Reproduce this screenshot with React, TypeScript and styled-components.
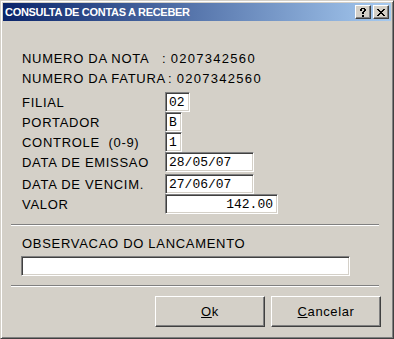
import React from 'react';
import styled, { createGlobalStyle } from 'styled-components';

const Global = createGlobalStyle`
  html, body { margin: 0; padding: 0; background: #D4D0C8; }
  body { font-family: "Liberation Sans", Arial, sans-serif; color: #000; }
  * { box-sizing: border-box; }
`;

const Window = styled.div`
  width: 394px;
  height: 339px;
  background: #D4D0C8;
  border: 1px solid;
  border-color: #D4D0C8 #404040 #404040 #D4D0C8;
  box-shadow: inset 1px 1px #ffffff, inset -1px -1px #808080;
  padding: 2px;
  display: flex;
  flex-direction: column;
`;

const TitleBar = styled.div`
  height: 18px;
  display: flex;
  align-items: center;
  background: linear-gradient(to right, #0A246A, #A6CAF0);
  padding-left: 2px;
`;

const TitleText = styled.span`
  color: #fff;
  font-family: "Liberation Sans", Arial, sans-serif;
  font-weight: bold;
  font-size: 11px;
  letter-spacing: -0.3px;
`;

const CaptionButtons = styled.div`
  margin-left: auto;
  margin-right: 2px;
  display: flex;
  gap: 2px;
`;

const CaptionButton = styled.div`
  width: 16px;
  height: 14px;
  background: #D4D0C8;
  border: 1px solid;
  border-color: #ffffff #404040 #404040 #ffffff;
  box-shadow: inset -1px -1px #808080, inset 1px 1px #D4D0C8;
  display: flex;
  align-items: center;
  justify-content: center;
`;

const Body = styled.div`
  padding: 27px 8px 0 8px;
  display: flex;
  flex-direction: column;
  font-size: 13px;
  letter-spacing: 0.7px;
`;

const Section = styled.div`
  padding-left: 11px;
  display: flex;
  flex-direction: column;
`;

const InfoRow = styled.div`
  height: 20px;
  display: flex;
  align-items: center;
  white-space: pre;
`;

const Label = styled.span<{ $w: number }>`
  width: ${p => p.$w}px;
  flex: none;
  white-space: pre;
  overflow: visible;
`;

const InfoValue = styled.span`
  flex: none;
  white-space: pre;
`;

const Digits = styled.span`
  letter-spacing: 1.3px;
`;

const Fields = styled.div`
  margin-top: 4px;
  display: flex;
  flex-direction: column;
`;

const FieldRow = styled.div<{ $mt?: number }>`
  height: 20px;
  margin-top: ${p => p.$mt ?? 0}px;
  display: grid;
  grid-template-columns: 143px auto;
  align-items: center;
  white-space: pre;
`;

const Edit = styled.div<{ $w: number; $right?: boolean }>`
  width: ${p => p.$w}px;
  height: 20px;
  background: #fff;
  border: 1px solid;
  border-color: #808080 #ffffff #ffffff #808080;
  box-shadow: inset 1px 1px #404040, inset -1px -1px #D4D0C8;
  font-family: "Liberation Mono", "Courier New", monospace;
  font-size: 13px;
  letter-spacing: 0;
  display: flex;
  align-items: center;
  justify-content: ${p => (p.$right ? 'flex-end' : 'flex-start')};
  padding: 0 4px 0 3px;
  white-space: pre;
`;

const Separator = styled.div<{ $mt: number }>`
  width: 368px;
  height: 2px;
  margin-top: ${p => p.$mt}px;
  border-top: 1px solid #808080;
  border-bottom: 1px solid #ffffff;
`;

const ObsLabel = styled.div`
  height: 20px;
  margin-top: 7px;
  padding-left: 11px;
  display: flex;
  align-items: center;
`;

const ObsEditWrap = styled.div`
  margin-top: 3px;
  padding-left: 10px;
`;

const ButtonRow = styled.div`
  margin-top: 9px;
  display: flex;
  justify-content: flex-end;
  gap: 6px;
  padding-right: 2px;
`;

const Button = styled.button`
  width: 110px;
  height: 31px;
  padding: 0;
  background: #D4D0C8;
  border: 1px solid;
  border-color: #ffffff #404040 #404040 #ffffff;
  box-shadow: inset -1px -1px #808080, inset 1px 1px #D4D0C8;
  font-family: "Liberation Sans", Arial, sans-serif;
  font-size: 13px;
  letter-spacing: 0.6px;
  color: #000;
  display: flex;
  align-items: center;
  justify-content: center;
`;

const CloseIcon = () => (
  <svg width="8" height="7" viewBox="0 0 8 7" shapeRendering="crispEdges">
    <path d="M0 0h2v1H0zM6 0h2v1H6zM1 1h2v1H1zM5 1h2v1H5zM2 2h4v1H2zM3 3h2v1H3zM2 4h4v1H2zM1 5h2v1H1zM5 5h2v1H5zM0 6h2v1H0zM6 6h2v1H6z" fill="#000" />
  </svg>
);

const HelpIcon = () => (
  <svg width="6" height="9" viewBox="0 0 6 9" shapeRendering="crispEdges">
    <path d="M1 0h4v1H1zM0 1h2v2H0zM4 1h2v2H4zM3 3h2v1H3zM2 4h2v2H2zM2 7h2v2H2z" fill="#000" />
  </svg>
);

export default function App() {
  return (
    <>
      <Global />
      <Window>
        <TitleBar>
          <TitleText>CONSULTA DE CONTAS A RECEBER</TitleText>
          <CaptionButtons>
            <CaptionButton><HelpIcon /></CaptionButton>
            <CaptionButton><CloseIcon /></CaptionButton>
          </CaptionButtons>
        </TitleBar>
        <Body>
          <Section>
            <InfoRow>
              <Label $w={140}>NUMERO DA NOTA</Label>
              <InfoValue>: <Digits>0207342560</Digits></InfoValue>
            </InfoRow>
            <InfoRow>
              <Label $w={146}>NUMERO DA FATURA</Label>
              <InfoValue>: <Digits>0207342560</Digits></InfoValue>
            </InfoRow>
            <Fields>
              <FieldRow>FILIAL<Edit $w={25}>02</Edit></FieldRow>
              <FieldRow>PORTADOR<Edit $w={17}>B</Edit></FieldRow>
              <FieldRow>{'CONTROLE  (0-9)'}<Edit $w={17}>1</Edit></FieldRow>
              <FieldRow>DATA DE EMISSAO<Edit $w={89}>28/05/07</Edit></FieldRow>
              <FieldRow $mt={2}>DATA DE VENCIM.<Edit $w={89}>27/06/07</Edit></FieldRow>
              <FieldRow>VALOR<Edit $w={113} $right>142.00</Edit></FieldRow>
            </Fields>
          </Section>
          <Separator $mt={10} />
          <ObsLabel>OBSERVACAO DO LANCAMENTO</ObsLabel>
          <ObsEditWrap><Edit $w={329} /></ObsEditWrap>
          <Separator $mt={9} />
          <ButtonRow>
            <Button><u>O</u>k</Button>
            <Button><u>C</u>ancelar</Button>
          </ButtonRow>
        </Body>
      </Window>
    </>
  );
}
